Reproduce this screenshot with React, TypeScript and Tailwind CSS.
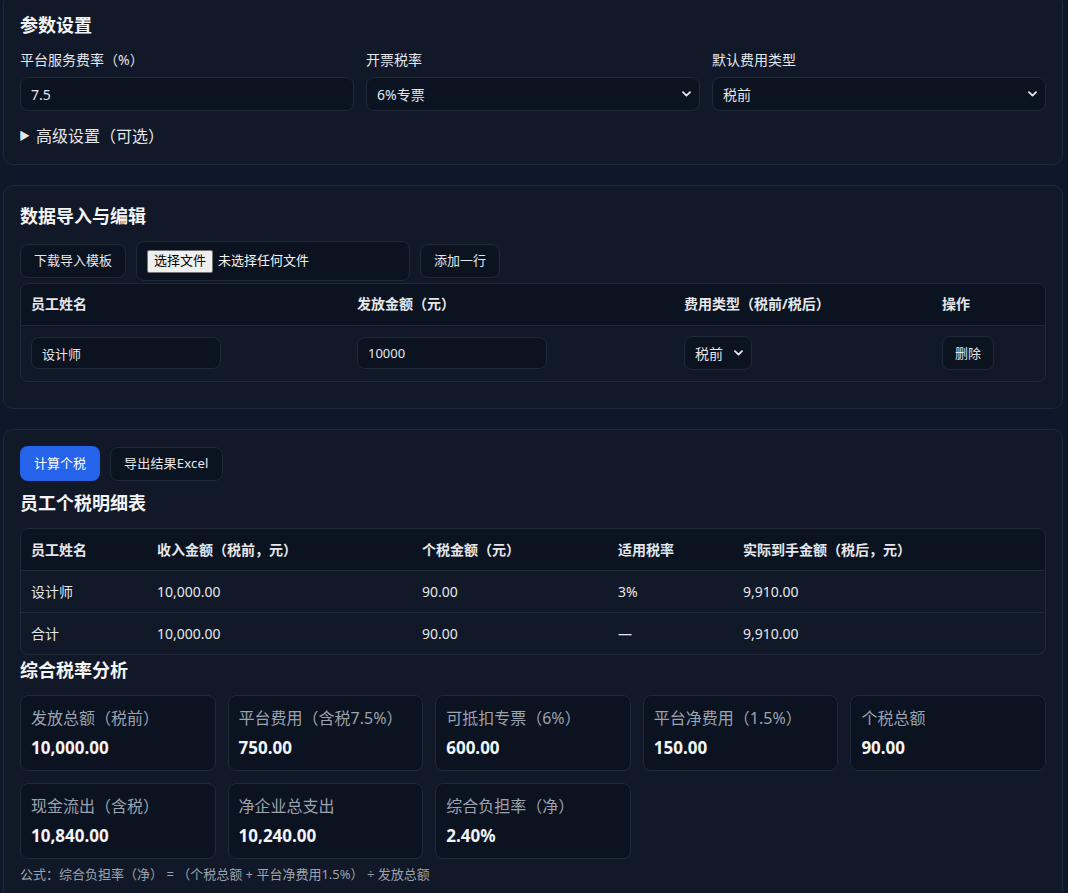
import React from "react";

const Chevron = () => (
  <svg
    className="pointer-events-none absolute right-[9px] top-1/2 -translate-y-1/2"
    width="9"
    height="6"
    viewBox="0 0 9 6"
    fill="none"
  >
    <path d="M1 1.2L4.5 4.6L8 1.2" stroke="#e5e7eb" strokeWidth="1.8" strokeLinecap="round" strokeLinejoin="round" />
  </svg>
);

function SelectBox({ value, className }: { value: string; className: string }) {
  return (
    <div className={"relative " + className}>
      <select
        defaultValue={value}
        className="h-full w-full appearance-none rounded-lg border border-[#1f2937] bg-[#0b1220] pl-[10px] pr-6 text-[14px] text-[#e5e7eb] outline-none"
      >
        <option>{value}</option>
      </select>
      <Chevron />
    </div>
  );
}

const Btn = ({ children }: { children: React.ReactNode }) => (
  <button className="h-[34px] rounded-lg border border-[#1f2937] bg-[#0b1220] px-[13px] text-[13px] text-[#e5e7eb]">
    {children}
  </button>
);

const Stat = ({ label, value }: { label: string; value: string }) => (
  <div className="h-[76px] rounded-lg border border-[#1f2937] bg-[#0b1220] px-[10px] pt-[10px]">
    <div className="text-[16px] leading-[24px] text-[#9ca3af]">{label}</div>
    <div className="mt-[6px] text-[17px] font-bold leading-[24px] text-[#f3f4f6]">{value}</div>
  </div>
);

export default function App() {
  return (
    <div className="min-h-[893px] overflow-hidden bg-[#0f172a] font-['Segoe_UI','Noto_Sans','Noto_Sans_CJK_SC',sans-serif] text-[#e5e7eb]">
      <div className="-mt-[6px] ml-[3px] mr-[5px] flex flex-col gap-5">
        {/* Card 1 */}
        <div className="rounded-[10px] border border-[#1f2937] bg-[#111827] p-4">
          <h2 className="mb-[11px] text-[18px] font-bold leading-[28px] text-[#f3f4f6]">参数设置</h2>
          <div className="grid grid-cols-3 gap-3">
            <div>
              <div className="mb-[7px] text-[14px] leading-[20px]">平台服务费率（%）</div>
              <input
                defaultValue="7.5"
                className="h-[34px] w-full rounded-lg border border-[#1f2937] bg-[#0b1220] px-[10px] text-[14px] text-[#e5e7eb] outline-none"
              />
            </div>
            <div>
              <div className="mb-[7px] text-[14px] leading-[20px]">开票税率</div>
              <SelectBox value="6%专票" className="h-[34px] w-full" />
            </div>
            <div>
              <div className="mb-[7px] text-[14px] leading-[20px]">默认费用类型</div>
              <SelectBox value="税前" className="h-[34px] w-full" />
            </div>
          </div>
          <div className="mt-[13px] flex items-center text-[16px] leading-[24px]">
            <span className="mr-[6px] -ml-[1px] text-[11px]">▶</span>
            <span>高级设置（可选）</span>
          </div>
        </div>

        {/* Card 2 */}
        <div className="rounded-[10px] border border-[#1f2937] bg-[#111827] p-4">
          <h2 className="mb-[11px] text-[18px] font-bold leading-[28px] text-[#f3f4f6]">数据导入与编辑</h2>
          <div className="flex items-center gap-[10px]">
            <Btn>下载导入模板</Btn>
            <div className="flex h-[40px] w-[274px] items-center rounded-lg border border-[#1f2937] bg-[#0b1220] pl-[10px] text-[13px]">
              <span className="flex h-[23px] items-center rounded-[2px] border border-[#767676] bg-[#efefef] px-[6px] text-[13px] text-black">
                选择文件
              </span>
              <span className="ml-[5px] text-[#f3f4f6]">未选择任何文件</span>
            </div>
            <Btn>添加一行</Btn>
          </div>
          <div className="mb-[10px] mt-[2px] overflow-hidden rounded-lg border border-[#1f2937]">
            <table className="w-full table-fixed border-collapse text-left">
              <colgroup>
                <col className="w-[326px]" />
                <col className="w-[327px]" />
                <col className="w-[258px]" />
                <col />
              </colgroup>
              <thead>
                <tr className="h-[41px] bg-[#0b1220] text-[14px] font-bold">
                  <th className="px-[10px] pb-[2px]">员工姓名</th>
                  <th className="px-[10px] pb-[2px]">发放金额（元）</th>
                  <th className="px-[10px] pb-[2px]">费用类型（税前/税后）</th>
                  <th className="px-[10px] pb-[2px]">操作</th>
                </tr>
              </thead>
              <tbody>
                <tr className="h-[56px] border-t border-[#1f2937]">
                  <td className="px-[10px]">
                    <input
                      defaultValue="设计师"
                      className="h-[32px] w-[190px] rounded-lg border border-[#1f2937] bg-[#0b1220] px-[10px] text-[13px] text-[#e5e7eb] outline-none"
                    />
                  </td>
                  <td className="px-[10px]">
                    <input
                      defaultValue="10000"
                      className="h-[32px] w-[190px] rounded-lg border border-[#1f2937] bg-[#0b1220] px-[10px] text-[13px] text-[#e5e7eb] outline-none"
                    />
                  </td>
                  <td className="px-[10px]">
                    <SelectBox value="税前" className="h-[34px] w-[68px]" />
                  </td>
                  <td className="px-[10px]">
                    <button className="h-[34px] w-[52px] rounded-lg border border-[#1f2937] bg-[#0b1220] text-[13px] text-[#e5e7eb]">
                      删除
                    </button>
                  </td>
                </tr>
              </tbody>
            </table>
          </div>
        </div>

        {/* Card 3 */}
        <div className="rounded-[10px] border border-[#1f2937] bg-[#111827] p-4 pb-8">
          <div className="flex items-center gap-[10px]">
            <button className="h-[35px] rounded-lg bg-[#2563eb] px-[14px] text-[13px] text-white">计算个税</button>
            <button className="h-[34px] rounded-lg border border-[#1f2937] bg-[#0b1220] px-[13px] text-[13px] tracking-[0.2px] text-[#e5e7eb]">
              导出结果Excel
            </button>
          </div>
          <h2 className="mt-[8px] text-[18px] font-bold leading-[28px] text-[#f3f4f6]">员工个税明细表</h2>
          <div className="mt-[11px] overflow-hidden rounded-lg border border-[#1f2937]">
            <table className="w-full table-fixed border-collapse text-left text-[14px]">
              <colgroup>
                <col className="w-[126px]" />
                <col className="w-[265px]" />
                <col className="w-[196px]" />
                <col className="w-[125px]" />
                <col />
              </colgroup>
              <thead>
                <tr className="h-[41px] bg-[#0b1220] font-bold">
                  <th className="px-[10px]">员工姓名</th>
                  <th className="px-[10px]">收入金额（税前，元）</th>
                  <th className="px-[10px]">个税金额（元）</th>
                  <th className="px-[10px]">适用税率</th>
                  <th className="px-[10px]">实际到手金额（税后，元）</th>
                </tr>
              </thead>
              <tbody>
                <tr className="h-[42px] border-t border-[#1f2937]">
                  <td className="px-[10px]">设计师</td>
                  <td className="px-[10px]">10,000.00</td>
                  <td className="px-[10px]">90.00</td>
                  <td className="px-[10px]">3%</td>
                  <td className="px-[10px]">9,910.00</td>
                </tr>
                <tr className="h-[42px] border-t border-[#1f2937]">
                  <td className="px-[10px]">合计</td>
                  <td className="px-[10px]">10,000.00</td>
                  <td className="px-[10px]">90.00</td>
                  <td className="px-[10px]">—</td>
                  <td className="px-[10px]">9,910.00</td>
                </tr>
              </tbody>
            </table>
          </div>
          <h2 className="mt-[1px] text-[18px] font-bold leading-[28px] text-[#f3f4f6]">综合税率分析</h2>
          <div className="mt-[11px] grid grid-cols-5 gap-3">
            <Stat label="发放总额（税前）" value="10,000.00" />
            <Stat label="平台费用（含税7.5%）" value="750.00" />
            <Stat label="可抵扣专票（6%）" value="600.00" />
            <Stat label="平台净费用（1.5%）" value="150.00" />
            <Stat label="个税总额" value="90.00" />
            <Stat label="现金流出（含税）" value="10,840.00" />
            <Stat label="净企业总支出" value="10,240.00" />
            <Stat label="综合负担率（净）" value="2.40%" />
          </div>
          <div className="mt-[6px] text-[13px] leading-[18px] text-[#9ca3af]">
            公式：综合负担率（净） = （个税总额 + 平台净费用1.5%） ÷ 发放总额
          </div>
        </div>
      </div>
    </div>
  );
}
